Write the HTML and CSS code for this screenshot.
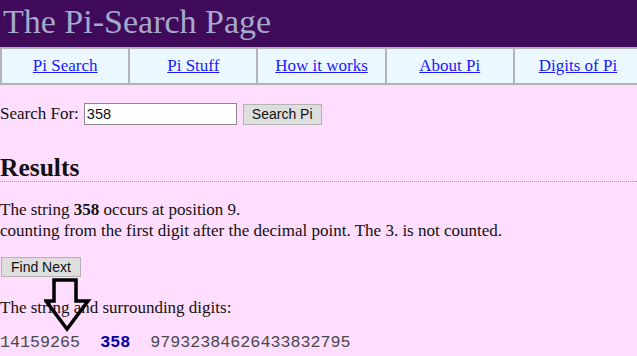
FILE: index.html
```html
<!DOCTYPE html>
<html lang="en">
<head>
  <meta charset="UTF-8"/>
  <title>The Pi-Search Page</title>
  <link rel="stylesheet" href="styles.css">
</head>
<body>
  <div class="banner">
    <h1>The Pi-Search Page</h1>
  </div>

  <div class="nav">
    <div class="nav-cell"><a href="#">Pi Search</a></div>
    <div class="nav-cell"><a href="#">Pi Stuff</a></div>
    <div class="nav-cell"><a href="#">How it works</a></div>
    <div class="nav-cell"><a href="#">About Pi</a></div>
    <div class="nav-cell"><a href="#">Digits of Pi</a></div>
  </div>

  <form class="search-form">
    <label for="query">Search For:</label>
    <input type="text" id="query" value="358">
    <button type="button" class="btn">Search Pi</button>
  </form>

  <h2 class="results-title">Results</h2>

  <p class="result-text">The string <b>358</b> occurs at position 9.<br>
  counting from the first digit after the decimal point. The 3. is not counted.</p>

  <button type="button" class="btn find-next">Find Next</button>

  <div class="context">
    <svg class="arrow" width="48" height="54" viewBox="0 0 48 54">
      <polygon points="10,2 32,2 32,23 44,23 23,51 2,23 10,23" fill="none" stroke="#000" stroke-width="3.5" stroke-linejoin="miter"/>
    </svg>
    <p>The string and surrounding digits:</p>
    <p class="digits">14159265  <b>358</b>  97932384626433832795</p>
  </div>
</body>
</html>
```

FILE: styles.css
```css
body { margin:0; background:#ffddff; font-family:"Liberation Serif", "Times New Roman", serif; font-size:17px; color:#111; }
.banner { background:#3f0a5a; height:47px; }
.banner h1 { margin:0; padding-left:3px; font-size:34px; font-weight:normal; line-height:44px; color:#a4aacb; }
.nav { display:flex; background:#ebf8ff; border-top:2px solid #b3b3b3; border-bottom:2px solid #b3b3b3; height:34px; margin-right:-4px; }
.nav-cell { flex:1; display:flex; align-items:center; justify-content:center; border-left:2px solid #b3b3b3; }
.nav-cell a { color:#1a1aff; }
.search-form { display:flex; align-items:center; margin:18px 0 0 0; }
.search-form label { margin-right:5px; }
.search-form input { width:147px; height:18px; padding:1px 2px; border:1px solid #8a8a8a; font-family:"Liberation Sans", Arial, sans-serif; font-size:14.5px; background:#fff; color:#111; margin:0 6px 0 0; }
.btn { font-family:"Liberation Sans", Arial, sans-serif; font-size:14px; background:#dedede; border:1px solid #b3b3b3; padding:1px 8px; height:21px; color:#111; }
.results-title { margin:30px 0 0 0; font-size:25.5px; padding-bottom:0; border-bottom:1px dotted #e8738a; line-height:26px; }
.result-text { margin:17px 0 0 0; line-height:21px; }
.find-next { display:block; margin:16px 0 0 1px; padding:1px 9px; height:20px; }
.context { position:relative; padding-top:21px; }
.context p { margin:0; }
.context .digits { margin-top:15px; }
.arrow { position:absolute; left:44px; top:1px; }
.digits { font-family:"Liberation Mono", "Courier New", monospace; font-size:16.7px; color:#4a4a4a; white-space:pre; }
.digits b { color:#0000aa; font-weight:bold; }
```
